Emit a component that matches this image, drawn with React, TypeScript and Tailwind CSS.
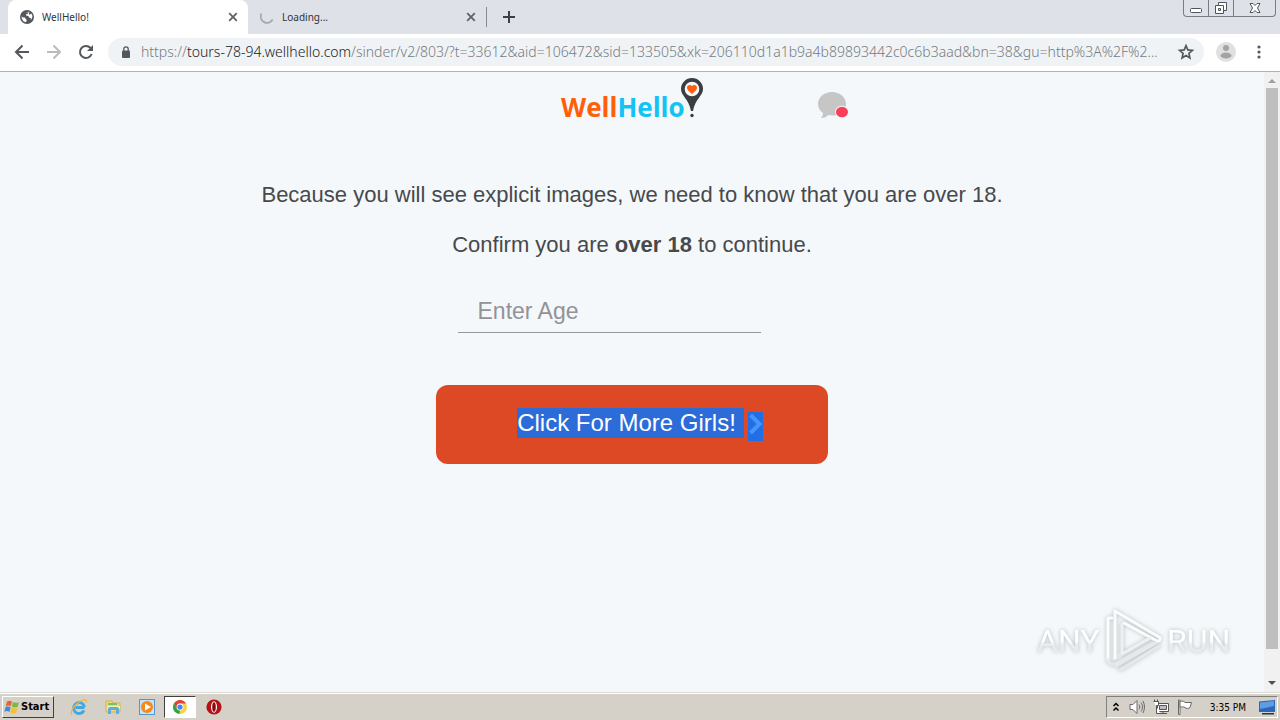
import type { ReactNode } from "react";

interface IconProps {
  className?: string;
}

interface TabProps {
  title: string;
  icon: ReactNode;
  active?: boolean;
}

function GlobeIcon({ className }: IconProps) {
  return (
    <svg viewBox="0 0 14 14" className={className} aria-hidden="true">
      <circle cx="7" cy="7" r="7" fill="#54585d" />
      <path d="M1.6 6.2 3 7.4 5 7.6 5.6 9l1 .4-.3 2.6C3.6 12 1.5 9.7 1.6 6.2Z" fill="#fff" />
      <path d="M5.3 2.2 8.6 1.8 8 3.4 6.2 4.2 6 5.6 8.4 6 9 7.6 11 8.2 10.6 10.2C12.8 8 13 5 11.2 3.4L9.8 4.8 8.8 3.8 9.4 2.2Z" fill="#fff" />
    </svg>
  );
}

function SpinnerIcon({ className }: IconProps) {
  return (
    <svg viewBox="0 0 14 14" className={className} aria-hidden="true">
      <path d="M1.4 3.6A6 6 0 0 0 12.6 9.5" fill="none" stroke="#a6a8ac" strokeWidth="1.8" />
    </svg>
  );
}

function CloseIcon({ className }: IconProps) {
  return (
    <svg viewBox="0 0 10 10" className={className} aria-hidden="true">
      <path d="m1.2 1.2 7.6 7.6m0-7.6L1.2 8.8" stroke="#5f6368" strokeWidth="1.8" />
    </svg>
  );
}

function Logo() {
  return (
    <svg viewBox="0 0 144 44" className="h-11 w-36 overflow-visible" role="img" aria-label="WellHello">
      <text x="1" y="41" fontFamily="'Open Sans', sans-serif" fontWeight="700" fontSize="26">
        <tspan fill="#ff5f0a">Well</tspan>
        <tspan fill="#12c3f4">Hello</tspan>
      </text>
      <path
        fillRule="evenodd"
        fill="#3a3d42"
        d="M132 2a11 11 0 0 1 11 11c0 7-8 10-10 22h-2c-2-12-10-15-10-22A11 11 0 0 1 132 2Zm0 3.7a7.3 7.3 0 1 0 0 14.6 7.3 7.3 0 0 0 0-14.6Z"
      />
      <path d="M132 18c-3-2.3-5-4-5-6.2 0-3 3.6-3.7 5-1.5 1.4-2.2 5-1.5 5 1.5 0 2.2-2 3.9-5 6.2Z" fill="#ff5f0a" />
      <circle cx="132" cy="39.5" r="1.7" fill="#3a3d42" />
    </svg>
  );
}

function ChatIcon({ className }: IconProps) {
  return (
    <svg viewBox="0 0 32 30" className={className} aria-hidden="true">
      <path d="M15 1C7 1 1 6 1 13c0 4 2 7 5 9 0 2-1 4-2 5 3 0 6-1 7-3 11 2 18-3 18-11C29 6 23 1 15 1Z" fill="#c6c6c6" />
      <ellipse cx="25" cy="21" rx="6.8" ry="6.3" fill="#f4f8fb" />
      <ellipse cx="25" cy="21" rx="6" ry="5.3" fill="#fa3e5a" />
    </svg>
  );
}

function Tab({ title, icon, active }: TabProps) {
  return (
    <div
      className={`flex h-[34px] items-center pr-[10px] pl-3 font-['Noto_Sans',sans-serif] text-[10px] text-[#303338] ${
        active ? "w-60 rounded-t-lg bg-white" : "w-[238px]"
      }`}
    >
      {icon}
      <span className="ml-2 flex-1 truncate">{title}</span>
      <button type="button" aria-label={`Close ${title}`}>
        <CloseIcon className="size-[10px]" />
      </button>
    </div>
  );
}

function WindowControls() {
  return (
    <div className="mr-1 flex h-[17px] self-start rounded-b border border-t-0 border-[#777c85]">
      <button type="button" aria-label="Minimize" className="flex w-[25px] items-center justify-center border-r border-[#777c85]">
        <svg viewBox="0 0 14 14" className="size-[14px]" aria-hidden="true">
          <rect x="1.5" y="7.5" width="11" height="4" rx="1" fill="#fff" stroke="#50545b" />
        </svg>
      </button>
      <button type="button" aria-label="Restore" className="flex w-[25px] items-center justify-center border-r border-[#777c85]">
        <svg viewBox="0 0 14 14" className="size-[14px]" aria-hidden="true">
          <path d="M4.5 1.5h8v8h-8Z" fill="#fff" stroke="#50545b" />
          <path d="M1.5 4.5h8v8h-8Z" fill="#fff" stroke="#50545b" />
          <path d="M4.5 7.5h2v2h-2Z" fill="#dee1e8" stroke="#50545b" />
        </svg>
      </button>
      <button type="button" aria-label="Close" className="flex w-[41px] items-center justify-center">
        <svg viewBox="0 0 14 14" className="size-[14px]" aria-hidden="true">
          <path d="M2 2.5h3l2 2 2-2h3L9.5 7l2.5 4.5H9l-2-2-2 2H2L4.5 7Z" fill="#fff" stroke="#50545b" />
        </svg>
      </button>
    </div>
  );
}

function TabStrip() {
  return (
    <header className="flex h-[34px] items-center bg-[#dee1e8] pl-2">
      <Tab active title="WellHello!" icon={<GlobeIcon className="size-[14px]" />} />
      <Tab title="Loading..." icon={<SpinnerIcon className="size-[14px]" />} />
      <div className="h-5 w-px bg-[#868a91]" />
      <button type="button" aria-label="New tab" className="ml-4">
        <svg viewBox="0 0 12 12" className="size-3" aria-hidden="true">
          <path d="M6 0v12M0 6h12" stroke="#3c4043" strokeWidth="2" />
        </svg>
      </button>
      <div className="flex-1" />
      <WindowControls />
    </header>
  );
}

function Toolbar() {
  return (
    <nav className="flex h-[38px] items-center border-b border-[#b1b3b5] bg-white px-[14px] pb-[2px]">
      <button type="button" aria-label="Back">
        <svg viewBox="0 0 16 16" className="size-4" fill="none" stroke="#54585d" strokeWidth="2" aria-hidden="true">
          <path d="M15 8H2m6.5-6.5L2 8l6.5 6.5" />
        </svg>
      </button>
      <button type="button" aria-label="Forward" className="ml-4">
        <svg viewBox="0 0 16 16" className="size-4" fill="none" stroke="#b9bbbe" strokeWidth="2" aria-hidden="true">
          <path d="M1 8h13M7.5 1.5 14 8l-6.5 6.5" />
        </svg>
      </button>
      <button type="button" aria-label="Reload" className="ml-4">
        <svg viewBox="0 0 16 16" className="size-4" aria-hidden="true">
          <path d="M13.6 10A6 6 0 1 1 12.3 3.8L14 5.5" fill="none" stroke="#54585d" strokeWidth="2" />
          <path d="M15 1v6H9Z" fill="#54585d" />
        </svg>
      </button>
      <div className="ml-[14px] flex h-7 min-w-0 flex-1 items-center rounded-full bg-[#f0f3f6] px-[13px]">
        <svg viewBox="0 0 10 12" className="h-3 w-[10px]" aria-hidden="true">
          <rect x="1" y="4.5" width="8" height="7.5" rx="1" fill="#54585d" />
          <path d="M2.8 5V3a2.2 2.2 0 0 1 4.4 0v2" fill="none" stroke="#54585d" strokeWidth="1.3" />
        </svg>
        <span className="ml-[10px] min-w-0 flex-1 truncate font-['Noto_Sans',sans-serif] text-[14px] font-light text-[#777b80]">
          https://<span className="text-[#202124]">tours-78-94.wellhello.com</span>
          /sinder/v2/803/?t=33612&amp;aid=106472&amp;sid=133505&amp;xk=206110d1a1b9a4b89893442c0c6b3aad&amp;bn=38&amp;gu=http%3A%2F%2...
        </span>
        <button type="button" aria-label="Bookmark this page" className="ml-2 -mr-1">
          <svg viewBox="0 0 16 16" className="size-[18px]" aria-hidden="true">
            <path d="m8 2.3 1.6 3.8 4.1.4-3.1 2.7.9 4.1L8 11.2l-3.5 2.1.9-4.1-3.1-2.7 4.1-.4Z" fill="none" stroke="#54585d" strokeWidth="1.5" />
          </svg>
        </button>
      </div>
      <button type="button" aria-label="Profile" className="ml-3">
        <svg viewBox="0 0 20 20" className="size-5" aria-hidden="true">
          <circle cx="10" cy="10" r="10" fill="#e0e0e0" />
          <circle cx="10" cy="6" r="3" fill="#a3a3a3" />
          <ellipse cx="10" cy="13.5" rx="5.5" ry="3" fill="#a3a3a3" />
        </svg>
      </button>
      <button type="button" aria-label="Menu" className="ml-4">
        <svg viewBox="0 0 14 14" className="size-[14px]" fill="#54585d" aria-hidden="true">
          <circle cx="7" cy="2" r="1.6" />
          <circle cx="7" cy="7" r="1.6" />
          <circle cx="7" cy="12" r="1.6" />
        </svg>
      </button>
    </nav>
  );
}

function Scrollbar() {
  return (
    <div className="flex w-4 flex-col items-center bg-[#f1f1f1] py-1">
      <svg viewBox="0 0 8 12" className="h-3 w-2" aria-hidden="true">
        <path d="M0 7 4 3l4 4Z" fill="#a0a0a0" />
      </svg>
      <div className="w-3 flex-1 bg-[#bfbfbf]" />
      <div className="h-[27px]" />
      <svg viewBox="0 0 8 12" className="h-3 w-2" aria-hidden="true">
        <path d="M0 5h8L4 9Z" fill="#505050" />
      </svg>
    </div>
  );
}

function Watermark() {
  return (
    <svg
      viewBox="0 0 204 68"
      className="absolute right-7 bottom-[18px] h-[68px] w-[204px] overflow-visible [filter:drop-shadow(0_0_2px_#b4b9bd)]"
      role="img"
      aria-label="ANY RUN"
    >
      <defs>
        <linearGradient id="shine" x1="0" y1="0" x2="0" y2="1">
          <stop offset="0.5" stopColor="#ffffff" />
          <stop offset="0.6" stopColor="#e9ecee" />
        </linearGradient>
      </defs>
      <g fill="url(#shine)" fontFamily="Roboto, sans-serif" fontSize="32">
        <text x="5" y="46">ANY</text>
        <text x="135" y="46">RUN</text>
      </g>
      <g fill="none" stroke="#fbfcfc" strokeWidth="3" strokeLinejoin="round" strokeLinecap="round">
        <path d="M76 12v42M76 12h4" />
        <path d="M83 52V5l44 26c2 1 1 5-2 4L92 17" />
        <path d="M90 18v30l28-16" stroke="#eef0f2" />
        <path d="m84 60 40-23M88 64l39-24" stroke="#e6e9eb" />
        <path d="M76 54c2 5 5 5 9 3l36-20" stroke="#e6e9eb" />
      </g>
    </svg>
  );
}

function AgeCheck() {
  return (
    <main className="relative flex-1 bg-[#f4f8fb] text-center text-[#47494c]">
      <div className="relative flex justify-center pt-1">
        <Logo />
        <ChatIcon className="absolute top-[19px] left-1/2 ml-[185px] h-[30px] w-8" />
      </div>
      <div className="mt-[60px] space-y-5 text-[22px] leading-[30px]">
        <p>Because you will see explicit images, we need to know that you are over 18.</p>
        <p>
          Confirm you are <b>over 18</b> to continue.
        </p>
      </div>
      <form className="flex flex-col items-center">
        <input
          type="text"
          aria-label="Enter Age"
          placeholder="Enter Age"
          className="mt-[30px] mr-[46px] h-[43px] w-[303px] border-b border-[#96989d] px-5 text-[23px] outline-none placeholder:text-[#929298]"
        />
        <button
          type="button"
          className="mt-[52px] flex h-[79px] w-[392px] items-start justify-center rounded-xl bg-[#dd4925] pt-[23px] pl-4 text-[24px] leading-[30px] text-white"
        >
          <span className="bg-[#2b6cd9] pr-2">Click For More Girls!</span>
          <svg viewBox="0 0 15 29" className="mt-1 ml-1 h-[29px] w-[15px] bg-[#216ee5]" aria-hidden="true">
            <path d="m2.5 3 9 9-9 9" fill="none" stroke="#4595ff" strokeWidth="4" />
          </svg>
        </button>
      </form>
      <Watermark />
    </main>
  );
}

function StartButton() {
  return (
    <button
      type="button"
      className="flex h-[22px] items-center gap-px border border-t-white border-r-[#404040] border-b-[#404040] border-l-white pr-1 pl-px text-[11px] font-bold text-black"
    >
      <svg viewBox="0 0 16 16" className="size-4" aria-hidden="true">
        <path d="M3 2.5c2-1.2 3.5-1 5 0L6.8 7.2c-1.6-1-3-1-5-.2Z" fill="#e8662c" />
        <path d="M9 3c2 1 3.6 1 5.8.2L13.6 8c-2 .8-3.8.6-5.8-.4Z" fill="#7db843" />
        <path d="M1.6 8c2-.8 3.4-.6 5 .2l-1.2 4.7c-1.6-1-3-1-5-.2Z" fill="#3f8ad8" />
        <path d="M7.5 8.6c2 1 3.7 1.1 5.8.3l-1.2 4.8c-2 .8-3.8.6-5.8-.4Z" fill="#f6c02c" />
      </svg>
      Start
    </button>
  );
}

function QuickLaunch() {
  return (
    <div className="ml-2 flex h-[22px] items-center gap-[2px]">
      <button type="button" aria-label="Internet Explorer" className="flex w-8 justify-center pl-[2px]">
        <svg viewBox="0 0 18 18" className="size-[18px]" fill="none" aria-hidden="true">
          <path d="M14.5 9.5H5.5M14 12.5A5.5 5.5 0 1 1 14.5 9" stroke="#43a7e0" strokeWidth="2.8" />
          <path d="M2 16.5C-.5 14 5 6 10 3.5c4-2.2 7-2.3 6.5 1" stroke="#e8b83a" strokeWidth="1.3" />
        </svg>
      </button>
      <button type="button" aria-label="Windows Explorer" className="flex w-8 justify-center pl-[2px]">
        <svg viewBox="0 0 18 18" className="size-[18px]" aria-hidden="true">
          <path d="M2 3h6l1 2h7v9H2Z" fill="#f1d877" stroke="#d2b454" />
          <path d="M4 5h9v2H4Z" fill="#7bc06b" />
          <path d="M3 8h13v3H3Z" fill="#f9eba9" />
          <path d="M4 16v-5c0-1 1-2 2-2h7c1 0 2 1 2 2v5h-3v-4H7v4Z" fill="#5caedb" />
        </svg>
      </button>
      <button type="button" aria-label="Media Player" className="flex w-8 justify-center pl-[2px]">
        <svg viewBox="0 0 18 18" className="size-[18px]" aria-hidden="true">
          <rect x="1.5" y="1.5" width="15" height="15" fill="#c5e2f7" stroke="#5795ca" />
          <circle cx="9" cy="9" r="6" fill="#f28a1c" />
          <path d="m7 5.5 6 3.5-6 3.5Z" fill="#fff" />
        </svg>
      </button>
      <button
        type="button"
        aria-label="Chrome"
        className="flex h-[22px] w-8 items-center justify-center border border-t-[#404040] border-r-white border-b-white border-l-[#404040] bg-white"
      >
        <svg viewBox="0 0 16 16" className="size-[14px]" aria-hidden="true">
          <circle cx="8" cy="8" r="8" fill="#ffd041" />
          <path d="M1.1 4A8 8 0 0 1 14.9 4H8L4.5 10Z" fill="#e24235" />
          <path d="M1.1 4 4.6 10 8 11.9 7.4 16A8 8 0 0 1 1.1 4Z" fill="#2ba24c" />
          <circle cx="8" cy="8" r="3.9" fill="#fff" />
          <circle cx="8" cy="8" r="3" fill="#4286f5" />
        </svg>
      </button>
      <button type="button" aria-label="Opera" className="flex w-8 justify-center">
        <svg viewBox="0 0 16 16" className="size-4" aria-hidden="true">
          <circle cx="8" cy="8" r="7.6" fill="#b31217" />
          <ellipse cx="8" cy="8" rx="3" ry="5.8" fill="#fff" />
          <ellipse cx="8" cy="8" rx="1.8" ry="4.8" fill="#8d0b10" />
        </svg>
      </button>
    </div>
  );
}

function Tray() {
  return (
    <div className="ml-auto flex h-[22px] items-center border border-t-[#808080] border-r-white border-b-white border-l-[#808080] pr-px pl-[5px] text-[11px] text-black">
      <svg viewBox="0 0 8 12" className="h-3 w-2" fill="none" stroke="#000" strokeWidth="1.5" aria-hidden="true">
        <path d="m1.5 5 2.5-2.5L6.5 5M1.5 9.5 4 7l2.5 2.5" />
      </svg>
      <svg viewBox="0 0 16 16" className="ml-[9px] size-4" fill="none" stroke="#6a6a6a" aria-hidden="true">
        <path d="M1 5.5h3l4-4v13l-4-4H1Z" fill="#fff" />
        <path d="M10 5.5c1 1.5 1 3.5 0 5M12 3.5c2 3 2 6 0 9M14 2c2 4 2 8 0 12" />
      </svg>
      <svg viewBox="0 0 16 16" className="ml-2 size-4" fill="#fff" stroke="#555" aria-hidden="true">
        <path d="M4.5 4.5h11v8h-11Z" />
        <path d="M6.5 6.5h7v4h-7Z" fill="#bdbdbd" />
        <path d="M7 14.5h7M10 12.5v2M.5 2.5h5v4h-2v8h4M1.5.5v2M4.5.5v2" />
      </svg>
      <svg viewBox="0 0 16 16" className="ml-2 size-4" fill="#fff" stroke="#6a6a6a" aria-hidden="true">
        <path d="M1.5 1v14.5h1.5V1Z" />
        <path d="M3 2.5c3-1 4 0 5 1h6.5L13 8.5c-2 1.5-4 1-5 0-2-1-3-1-5 0Z" />
      </svg>
      <time className="ml-[17px] text-[10px]">3:35 PM</time>
      <svg viewBox="0 0 18 16" className="ml-3 h-4 w-[18px]" aria-hidden="true">
        <path d="M1 2.5 17 1v12H1Z" fill="#2b67bd" />
        <path d="M2 3.5 16 2v5L2 10Z" fill="#5e9de2" />
        <path d="M4 14h12v1.5H4Z" fill="#24364d" />
      </svg>
    </div>
  );
}

function Taskbar() {
  return (
    <footer className="border-t border-[#dedbd5] bg-[#d5d0c8]">
      <div className="flex h-[27px] items-center border-t border-white px-[2px] font-['DejaVu_Sans_Condensed','DejaVu_Sans',sans-serif]">
        <StartButton />
        <QuickLaunch />
        <Tray />
      </div>
    </footer>
  );
}

export default function App() {
  return (
    <div className="flex min-h-screen flex-col font-['Liberation_Sans',sans-serif]">
      <TabStrip />
      <Toolbar />
      <div className="flex flex-1">
        <AgeCheck />
        <Scrollbar />
      </div>
      <Taskbar />
    </div>
  );
}
